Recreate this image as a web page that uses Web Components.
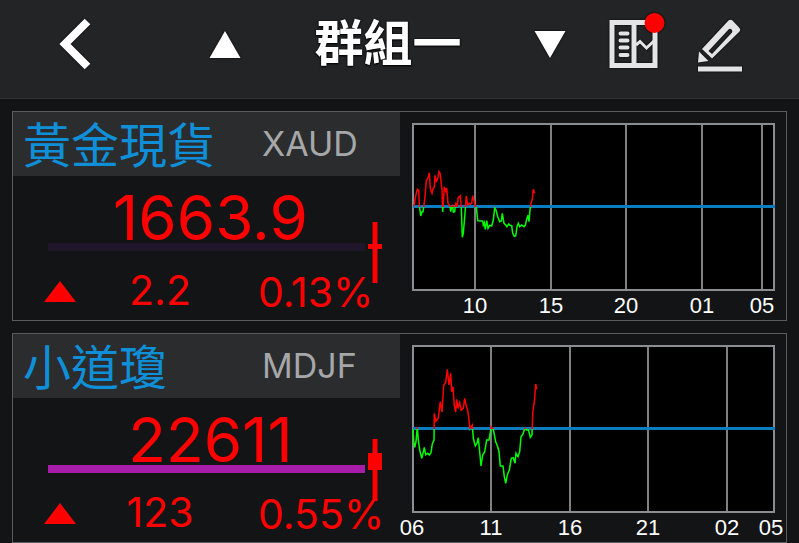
<!DOCTYPE html>
<html lang="zh-Hant">
<head>
<meta charset="utf-8">
<meta name="viewport" content="width=device-width, initial-scale=1">
<title>群組一</title>
<style>
  html { background: #131416; }
  body { margin: 0; overflow: hidden; font-family: Inter, "Noto Sans CJK TC", sans-serif; color: #fff; }
</style>
</head>
<body>
<watch-page></watch-page>

<template id="page">
  <style>
    :host { display: block; }
    main { display: flex; flex-direction: column; gap: 12px; padding: 12px; }
  </style>
  <group-bar>群組一</group-bar>
  <main>
    <quote-card name="黃金現貨" code="XAUD" price="1663.9" change="2.2" percent="0.13%" bar="#21152a" wick="46,107" box="68,73" chart="gold"></quote-card>
    <quote-card name="小道瓊" code="MDJF" price="22611" change="123" percent="0.55%" bar="#a81caa" wick="41,103" box="55,72" chart="dow"></quote-card>
  </main>
</template>

<template id="bar">
  <style>
    :host { display: block; background: #232426; border-bottom: 1px solid #303234; }
    header { display: grid; grid-template-columns: 150fr 150fr 176fr 32fr 84fr 84fr 88fr 35fr; align-items: center; height: 98px; padding-bottom: 10px; box-sizing: border-box; }
    h1 { margin: 0; text-align: center; font-size: 49px; line-height: 64px; font-weight: 700; white-space: nowrap; text-shadow: 0 0 2px #000, 0 1px 2px #000; }
    button { display: grid; place-items: center; height: 72px; padding: 0; border: 0; background: none; }
    svg { display: block; overflow: visible; filter: drop-shadow(0 0 1px #000); }
    .next { grid-column: 5; }
  </style>
  <header>
    <button aria-label="返回"><svg width="32" height="52" viewBox="0 0 32 52"><path d="M28.500 3.500 6 26l22.500 22.500" fill="none" stroke="#fff" stroke-width="8"/></svg></button>
    <button aria-label="上一組"><svg width="32" height="27" viewBox="0 0 32 27"><path d="M16 0 31.500 27H.5z" fill="#fff"/></svg></button>
    <h1><slot></slot></h1>
    <button class="next" aria-label="下一組"><svg width="32" height="27" viewBox="0 0 32 27"><path d="M.5 0h31L16 27z" fill="#fff"/></svg></button>
    <button aria-label="版面"><svg width="50" height="50" viewBox="0 0 50 50">
      <g fill="none" stroke="#e4e4e6">
        <path d="M3 3.500h43v43H3zM25 3v44" stroke-width="5"/>
        <path d="M27 26l4-3.500 6.500 6.500L46 21" stroke-width="3"/>
        <path d="M11.500 14.500h7M11.500 21.500h7M11.500 28.500h7M11.500 36h7" stroke-width="4" stroke-linecap="round"/>
      </g>
      <circle cx="45.500" cy="4" r="10" fill="#fe0000"/>
    </svg></button>
    <button aria-label="編輯"><svg width="44" height="52" viewBox="0 0 44 52">
      <path fill="#e4e4e6" fill-rule="evenodd" d="M4 31 30.500 2.500q2-1.500 4 0l7 7.500q1.500 2 0 3.500L14 40.500zM10.500 33 14 36 34 14.500q1-1.500-.5-3-1.500-1.300-3 0z"/>
      <path fill="#e4e4e6" d="M1 33.500 10.500 43 0 44.500zM0 48.500h44v5H0z"/>
    </svg></button>
  </header>
</template>

<template id="card">
  <style>
    :host { display: grid; grid-template-columns: 387fr 386fr; border: 1px solid #585c5f; }
    .title { display: grid; grid-template-columns: 238fr 149fr; align-items: center; height: 64px; background: #2b2c2e; }
    h2 { margin: 0; padding: 0 0 4px 10px; font: 400 48px/60px "Noto Sans CJK TC", sans-serif; color: #0f8fd8; white-space: nowrap; }
    .code { padding-left: 11px; font-size: 34px; line-height: 64px; font-weight: 400; color: #a6a7a9; }
    .quote { position: relative; height: 144px; color: #fe0000; }
    .range { position: absolute; inset: 0; width: 100%; height: 100%; }
    .price { position: relative; padding-left: 8px; text-align: center; font-size: 62px; line-height: 84px; }
    .detail { position: relative; display: grid; grid-template-columns: 93fr 108fr 44fr 142fr; align-items: center; font-size: 41px; line-height: 60px; }
    .arrow { justify-self: center; display: block; padding-top: 3px; }
    .change { text-align: center; }
    .percent { grid-column: 4; white-space: nowrap; padding-top: 4px; line-height: 56px; }
    trend-chart { padding: 11px 11px 0 12px; }
  </style>
  <section>
    <div class="title"><h2></h2><span class="code"></span></div>
    <div class="quote">
      <svg class="range" viewBox="0 0 387 144" preserveAspectRatio="none"></svg>
      <div class="price"></div>
      <div class="detail">
        <svg class="arrow" width="32" height="21" viewBox="0 0 32 21"><path d="M16 0 32 21H0z" fill="#fe0000"/></svg>
        <span class="change"></span><span class="percent"></span>
      </div>
    </div>
  </section>
  <trend-chart></trend-chart>
</template>

<script>
  const charts = {
    gold: {
      dy: 13,
      ticks: [[63, '10'], [139, '15'], [214, '20'], [290, '01'], [350, '05']],
      trace: '42,288 47,258 52,238 56,240 58,285 62,318 66,305 69,305 72,285 75,260 79,212 85,202 88,188 91,235 96,250 99,236 103,232 105,196 109,214 113,208 117,185 121,192 123,215 126,240 128,306 131,262 133,230 137,243 140,234 144,280 150,288 152,305 155,292 158,284 160,306 164,305 167,278 172,292 174,264 181,257 184,290 187,382 190,370 195,310 199,258 203,285 207,280 211,283 215,280 218,257 222,272 226,290 229,292 233,332 240,333 248,333 250,345 253,338 256,358 260,332 264,355 269,346 275,348 280,330 284,294 288,300 293,320 299,335 304,333 307,310 312,340 317,345 321,350 326,342 330,346 335,347 338,370 343,379 347,378 351,350 355,340 359,350 365,345 372,350 376,346 380,328 384,316 387,335 390,300 393,280 397,268 400,238 404,250'
    },
    dow: {
      dy: 15,
      ticks: [[0, '06'], [79, '11'], [158, '16'], [236, '21'], [315, '02'], [359, '05']],
      trace: '39,298 41,335 44,352 48,335 52,292 55,330 59,360 65,385 69,370 73,352 77,374 83,370 88,375 93,368 97,342 102,330 103,250 108,274 115,265 121,215 126,246 131,165 137,158 142,118 147,165 152,130 155,185 159,170 163,228 167,246 170,208 174,235 179,218 184,240 190,235 194,205 198,225 203,240 207,270 210,296 217,285 220,325 226,348 231,340 235,323 239,365 243,408 248,375 254,365 260,330 267,330 274,290 280,298 287,335 293,350 297,365 301,408 309,408 313,440 317,460 322,435 328,420 334,385 340,383 345,400 348,370 354,380 359,365 363,320 369,312 374,296 380,300 385,298 391,322 396,315 398,250 404,205 407,162 410,178'
    }
  };

  const stamp = (host, id) => {
    const root = host.attachShadow({ mode: 'open' });
    root.append(document.getElementById(id).content.cloneNode(true));
    return root;
  };

  class TrendChart extends HTMLElement {
    // Intraday trace: red above the reference price, green below it.
    draw(key) {
      const { dy, ticks, trace } = charts[key];
      const points = trace.split(' ').map(p => {
        const [x, y] = p.split(',').map(Number);
        return (x / 3 - 12).toFixed(1) + ',' + (y / 3 - dy).toFixed(1);
      }).join(' ');
      // The closing tick of the second session has its label beside the frame, with no rule.
      const rules = ticks.filter(([x]) => x > 0 && x < 355).map(([x]) => `M${x} 1V167`).join('');
      const root = this.shadowRoot || this.attachShadow({ mode: 'open' });
      root.innerHTML = `
        <style>
          :host { display: block; }
          svg { display: block; width: 100%; overflow: visible; }
          text { font: 22px "Liberation Sans", Arial, sans-serif; fill: #fff; text-anchor: middle; }
        </style>
        <svg viewBox="0 0 363 196" role="img" aria-label="走勢圖">
          <clipPath id="up"><rect width="363" height="84"/></clipPath>
          <clipPath id="down"><rect y="84" width="363" height="84"/></clipPath>
          <rect x="1" y="1" width="361" height="166" fill="#000"/>
          <path d="${rules}" stroke="#808080" stroke-width="2"/>
          <rect x="1" y="1" width="361" height="166" fill="none" stroke="#8a8e91" stroke-width="2"/>
          <path d="M1 83.500H363" stroke="#0a7dbe" stroke-width="3"/>
          <g fill="none" stroke-width="1.500">
            <polyline points="${points}" stroke="#fe0000" clip-path="url(#up)"/>
            <polyline points="${points}" stroke="#00fe00" clip-path="url(#down)"/>
          </g>
          ${ticks.map(([x, t]) => `<text x="${x}" y="190">${t}</text>`).join('')}
        </svg>`;
    }
  }

  class QuoteCard extends HTMLElement {
    connectedCallback() {
      if (this.shadowRoot) return;
      const root = stamp(this, 'card');
      customElements.upgrade(root);
      const get = n => this.getAttribute(n);
      root.querySelector('h2').textContent = get('name');
      for (const n of ['code', 'price', 'change', 'percent']) root.querySelector('.' + n).textContent = get(n);
      const [w0, w1] = get('wick').split(','), [b0, b1] = get('box').split(',');
      root.querySelector('.range').innerHTML =
        `<path d="M35 71H352" stroke="${get('bar')}" stroke-width="8"/>
         <path d="M362 ${w0}V${w1}" stroke="#fe0000" stroke-width="5"/>
         <path d="M362 ${b0}V${b1}" stroke="#fe0000" stroke-width="14"/>`;
      root.querySelector('trend-chart').draw(get('chart'));
    }
  }

  class GroupBar extends HTMLElement {
    connectedCallback() { if (!this.shadowRoot) stamp(this, 'bar'); }
  }

  class WatchPage extends HTMLElement {
    connectedCallback() { if (!this.shadowRoot) stamp(this, 'page'); }
  }

  customElements.define('trend-chart', TrendChart);
  customElements.define('quote-card', QuoteCard);
  customElements.define('group-bar', GroupBar);
  customElements.define('watch-page', WatchPage);
</script>
</body>
</html>
